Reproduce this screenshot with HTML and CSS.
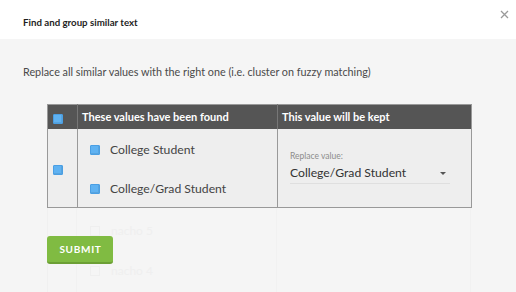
FILE: index.html
```html
<!DOCTYPE html>
<html>
<head>
<meta charset="utf-8">
<link rel="stylesheet" href="styles.css">
</head>
<body>
<div class="modal">
  <header class="modal-head">
    <h1 class="title">Find and group similar text</h1>
    <button class="close" aria-label="Close">
      <svg width="9" height="9" viewBox="0 0 9 9"><path d="M1 1L8 8M8 1L1 8" stroke="#9a9a9a" stroke-width="1.3" fill="none"/></svg>
    </button>
  </header>
  <div class="modal-body">
    <div class="ghost" aria-hidden="true">
      <div class="ghost-row g1"><span class="ghost-box"></span>nacho 5</div>
      <div class="ghost-row g2"><span class="ghost-box"></span>nacho 4</div>
    </div>
    <p class="desc">Replace all similar values with the right one (i.e. cluster on fuzzy matching)</p>
    <table class="grid">
      <thead>
        <tr>
          <th class="col-check"><span class="cb"></span></th>
          <th class="col-found">These values have been found</th>
          <th class="col-kept">This value will be kept</th>
        </tr>
      </thead>
      <tbody>
        <tr>
          <td class="col-check"><span class="cb"></span></td>
          <td class="col-found">
            <div class="values">
              <div class="value"><span class="cb"></span>College Student</div>
              <div class="value"><span class="cb"></span>College/Grad Student</div>
            </div>
          </td>
          <td class="col-kept">
            <div class="field">
              <label class="field-label">Replace value:</label>
              <div class="select">
                <span>College/Grad Student</span>
                <span class="caret"></span>
              </div>
            </div>
          </td>
        </tr>
      </tbody>
    </table>
    <button class="submit">SUBMIT</button>
  </div>
</div>
</body>
</html>
```

FILE: styles.css
```css
html, body {
  margin: 0;
  padding: 0;
  background: #f5f5f5;
}
body {
  font-family: Lato, "Noto Sans", sans-serif;
  width: 516px;
  height: 292px;
  overflow: hidden;
}
.modal {
  display: flex;
  flex-direction: column;
  height: 292px;
}
.modal-head {
  height: 39px;
  background: #ffffff;
  display: flex;
  align-items: flex-start;
  justify-content: space-between;
  padding-left: 23px;
  box-sizing: border-box;
}
.title {
  margin: 16px 0 0 0;
  font-size: 9.7px;
  font-weight: 700;
  color: #1e1e1e;
  line-height: 12px;
}
.close {
  background: none;
  border: 0;
  padding: 0;
  margin: 10px 7px 0 0;
  width: 9px;
  height: 9px;
  display: flex;
}
.modal-body {
  position: relative;
  isolation: isolate;
  flex: 1;
  overflow: hidden;
  padding: 0 0 0 23px;
  background: #f5f5f5;
}
.ghost {
  position: absolute;
  inset: 0;
  z-index: -1;
  pointer-events: none;
}
.ghost::before {
  content: "";
  position: absolute;
  left: 47px;
  top: 168px;
  width: 424px;
  height: 90px;
  background:
    linear-gradient(#f0f0f0, #f0f0f0) 0 0 / 1px 100% no-repeat,
    linear-gradient(#f1f1f1, #f1f1f1) 29px 0 / 1px 100% no-repeat,
    linear-gradient(#f1f1f1, #f1f1f1) 229px 0 / 1px 100% no-repeat,
    linear-gradient(#f1f1f1, #f1f1f1) 423px 0 / 1px 100% no-repeat;
}
.ghost-row {
  position: absolute;
  left: 90px;
  display: flex;
  align-items: center;
  gap: 11px;
  font-size: 12px;
  color: #efefef;
}
.g1 { top: 184px; }
.g2 { top: 224px; }
.ghost-box {
  width: 8px;
  height: 8px;
  border: 1px solid #efefef;
}
.desc {
  margin: 26px 0 0 0;
  font-size: 10.8px;
  line-height: 14px;
  color: #4a4a4a;
}
.grid {
  margin: 25px 0 0 24px;
  border-collapse: collapse;
  width: 425px;
  table-layout: fixed;
  border: 1px solid #999999;
}
.grid th {
  background: #555555;
  color: #ffffff;
  font-size: 11px;
  font-weight: 700;
  text-align: left;
  height: 24px;
  padding: 0 0 0 4px;
  border-left: 1px solid #777777;
  box-sizing: border-box;
}
.grid td {
  background: #eeeeee;
  height: 78px;
  padding: 0;
  border-left: 1px solid #999999;
  vertical-align: middle;
}
.grid th.col-check, .grid td.col-check {
  width: 30px;
  padding: 0 0 0 5px;
  border-left: 0;
}
.grid th.col-check .cb { margin-top: 5px; }
.grid td.col-check .cb { margin-top: 4px; }
.col-found { width: 200px; }
.cb {
  display: block;
  width: 10px;
  height: 10px;
  box-sizing: border-box;
  background: #5fb2f2;
  border: 1px solid #4a9fe4;
  border-radius: 1px;
  box-shadow: inset -1px -1px 0 rgba(0,0,0,0.08);
}
.values {
  display: flex;
  flex-direction: column;
  gap: 25px;
  padding: 4px 0 0 12px;
}
.value {
  display: flex;
  align-items: center;
  gap: 10px;
  font-size: 12.2px;
  line-height: 14px;
  color: #444444;
}
.col-kept .field {
  padding: 0 0 0 12px;
  margin-top: 0;
}
.field-label {
  display: block;
  font-size: 8.5px;
  color: #8c8c8c;
  line-height: 10px;
}
.select {
  margin-top: 5px;
  width: 160px;
  height: 17px;
  border-bottom: 1px solid #dfdfdf;
  display: flex;
  align-items: flex-start;
  justify-content: space-between;
  font-size: 12.2px;
  line-height: 14px;
  color: #333333;
}
.caret {
  width: 0;
  height: 0;
  margin: 6px 4px 0 0;
  border-left: 3px solid transparent;
  border-right: 3px solid transparent;
  border-top: 3px solid #555555;
}
.submit {
  display: block;
  margin: 28px 0 0 24px;
  width: 66px;
  height: 28px;
  box-sizing: border-box;
  background: #80bb42;
  border: 0;
  border-bottom: 2px solid #6c9f35;
  border-radius: 3px;
  color: #ffffff;
  font-family: Lato, "Noto Sans", sans-serif;
  font-size: 10px;
  font-weight: 700;
  letter-spacing: 0.7px;
  padding: 1px 0 0 1px;
  text-align: center;
}
```
